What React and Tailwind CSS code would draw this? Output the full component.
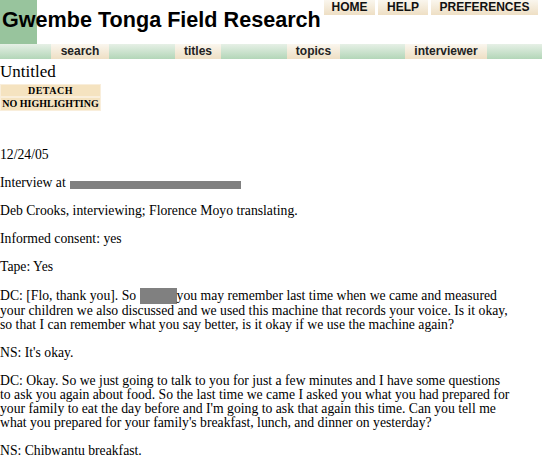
import React from "react";

const topLinks = [
  { label: "HOME", w: "w-[51px]" },
  { label: "HELP", w: "w-[50px]" },
  { label: "PREFERENCES", w: "w-[107px]" },
];

const tabs = [
  { label: "search", cls: "ml-[51px] w-[58px]" },
  { label: "titles", cls: "ml-[66px] w-[46px]" },
  { label: "topics", cls: "ml-[66px] w-[53px]" },
  { label: "interviewer", cls: "ml-[65px] w-[82px]" },
];

const beige = "bg-[linear-gradient(to_bottom,#faf6ee,#eedfc4)]";

export default function App() {
  return (
    <div className="w-[542px] h-[467px] overflow-hidden bg-white text-black font-['Liberation_Serif',serif]">
      {/* Header */}
      <div className="flex justify-between h-[44px] bg-[linear-gradient(to_right,#98c49d_37px,transparent_37px)]">
        <h1 className="pl-[2px] pt-[7px] whitespace-nowrap font-['Liberation_Sans',Arial,sans-serif] font-bold text-[21.6px] leading-[26px]">
          Gwembe Tonga Field Research
        </h1>
        <div className="flex shrink-0 gap-[3px] pr-[4px] h-[15px]">
          {topLinks.map((l) => (
            <a
              key={l.label}
              href="#"
              className={`${l.w} ${beige} text-center font-['Liberation_Sans',Arial,sans-serif] font-bold text-[12px] leading-[15px] text-[#111]`}
            >
              {l.label}
            </a>
          ))}
        </div>
      </div>

      {/* Tab bar */}
      <div className="flex h-[15px] bg-[linear-gradient(to_bottom,#e6f0e6,#b3d6b8)]">
        {tabs.map((t) => (
          <a
            key={t.label}
            href="#"
            className={`${t.cls} ${beige} text-center font-['Liberation_Sans',Arial,sans-serif] font-bold text-[12px] leading-[15px] text-[#222]`}
          >
            {t.label}
          </a>
        ))}
      </div>

      <div className="pt-[2px] text-[17px] leading-[21px]">Untitled</div>
      <div className="mt-[2px] flex flex-col w-[101px]">
        <button className="h-[13px] bg-[#f5e3c0] border border-[#f9eedb] text-[10px] leading-[11px] font-bold tracking-[0.5px]">
          DETACH
        </button>
        <button className="h-[14px] bg-[#f5e3c0] border border-[#f9eedb] text-[10px] leading-[12px] font-bold">
          NO HIGHLIGHTING
        </button>
      </div>

      {/* Transcript */}
      <div className="pt-[23px] text-[13.7px] leading-[14px] whitespace-nowrap [&>p]:my-[14px]">
        <p>12/24/05</p>
        <p>
          Interview at{" "}
          <span className="inline-block align-[-2px] ml-[1px] w-[171px] h-[8px] bg-[#808080]"></span>
        </p>
        <p>Deb Crooks, interviewing; Florence Moyo translating.</p>
        <p>Informed consent: yes</p>
        <p>Tape: Yes</p>
        <p>
          DC: [Flo, thank you]. So{" "}
          <span className="inline-block align-[-4px] w-[37px] h-[16px] bg-[#808080]"></span>
          you may remember last time when we came and measured
          <br />
          your children we also discussed and we used this machine that records your voice. Is it okay,
          <br />
          so that I can remember what you say better, is it okay if we use the machine again?
        </p>
        <p>NS: It's okay.</p>
        <p>
          DC: Okay. So we just going to talk to you for just a few minutes and I have some questions
          <br />
          to ask you again about food. So the last time we came I asked you what you had prepared for
          <br />
          your family to eat the day before and I'm going to ask that again this time. Can you tell me
          <br />
          what you prepared for your family's breakfast, lunch, and dinner on yesterday?
        </p>
        <p>NS: Chibwantu breakfast.</p>
      </div>
    </div>
  );
}
